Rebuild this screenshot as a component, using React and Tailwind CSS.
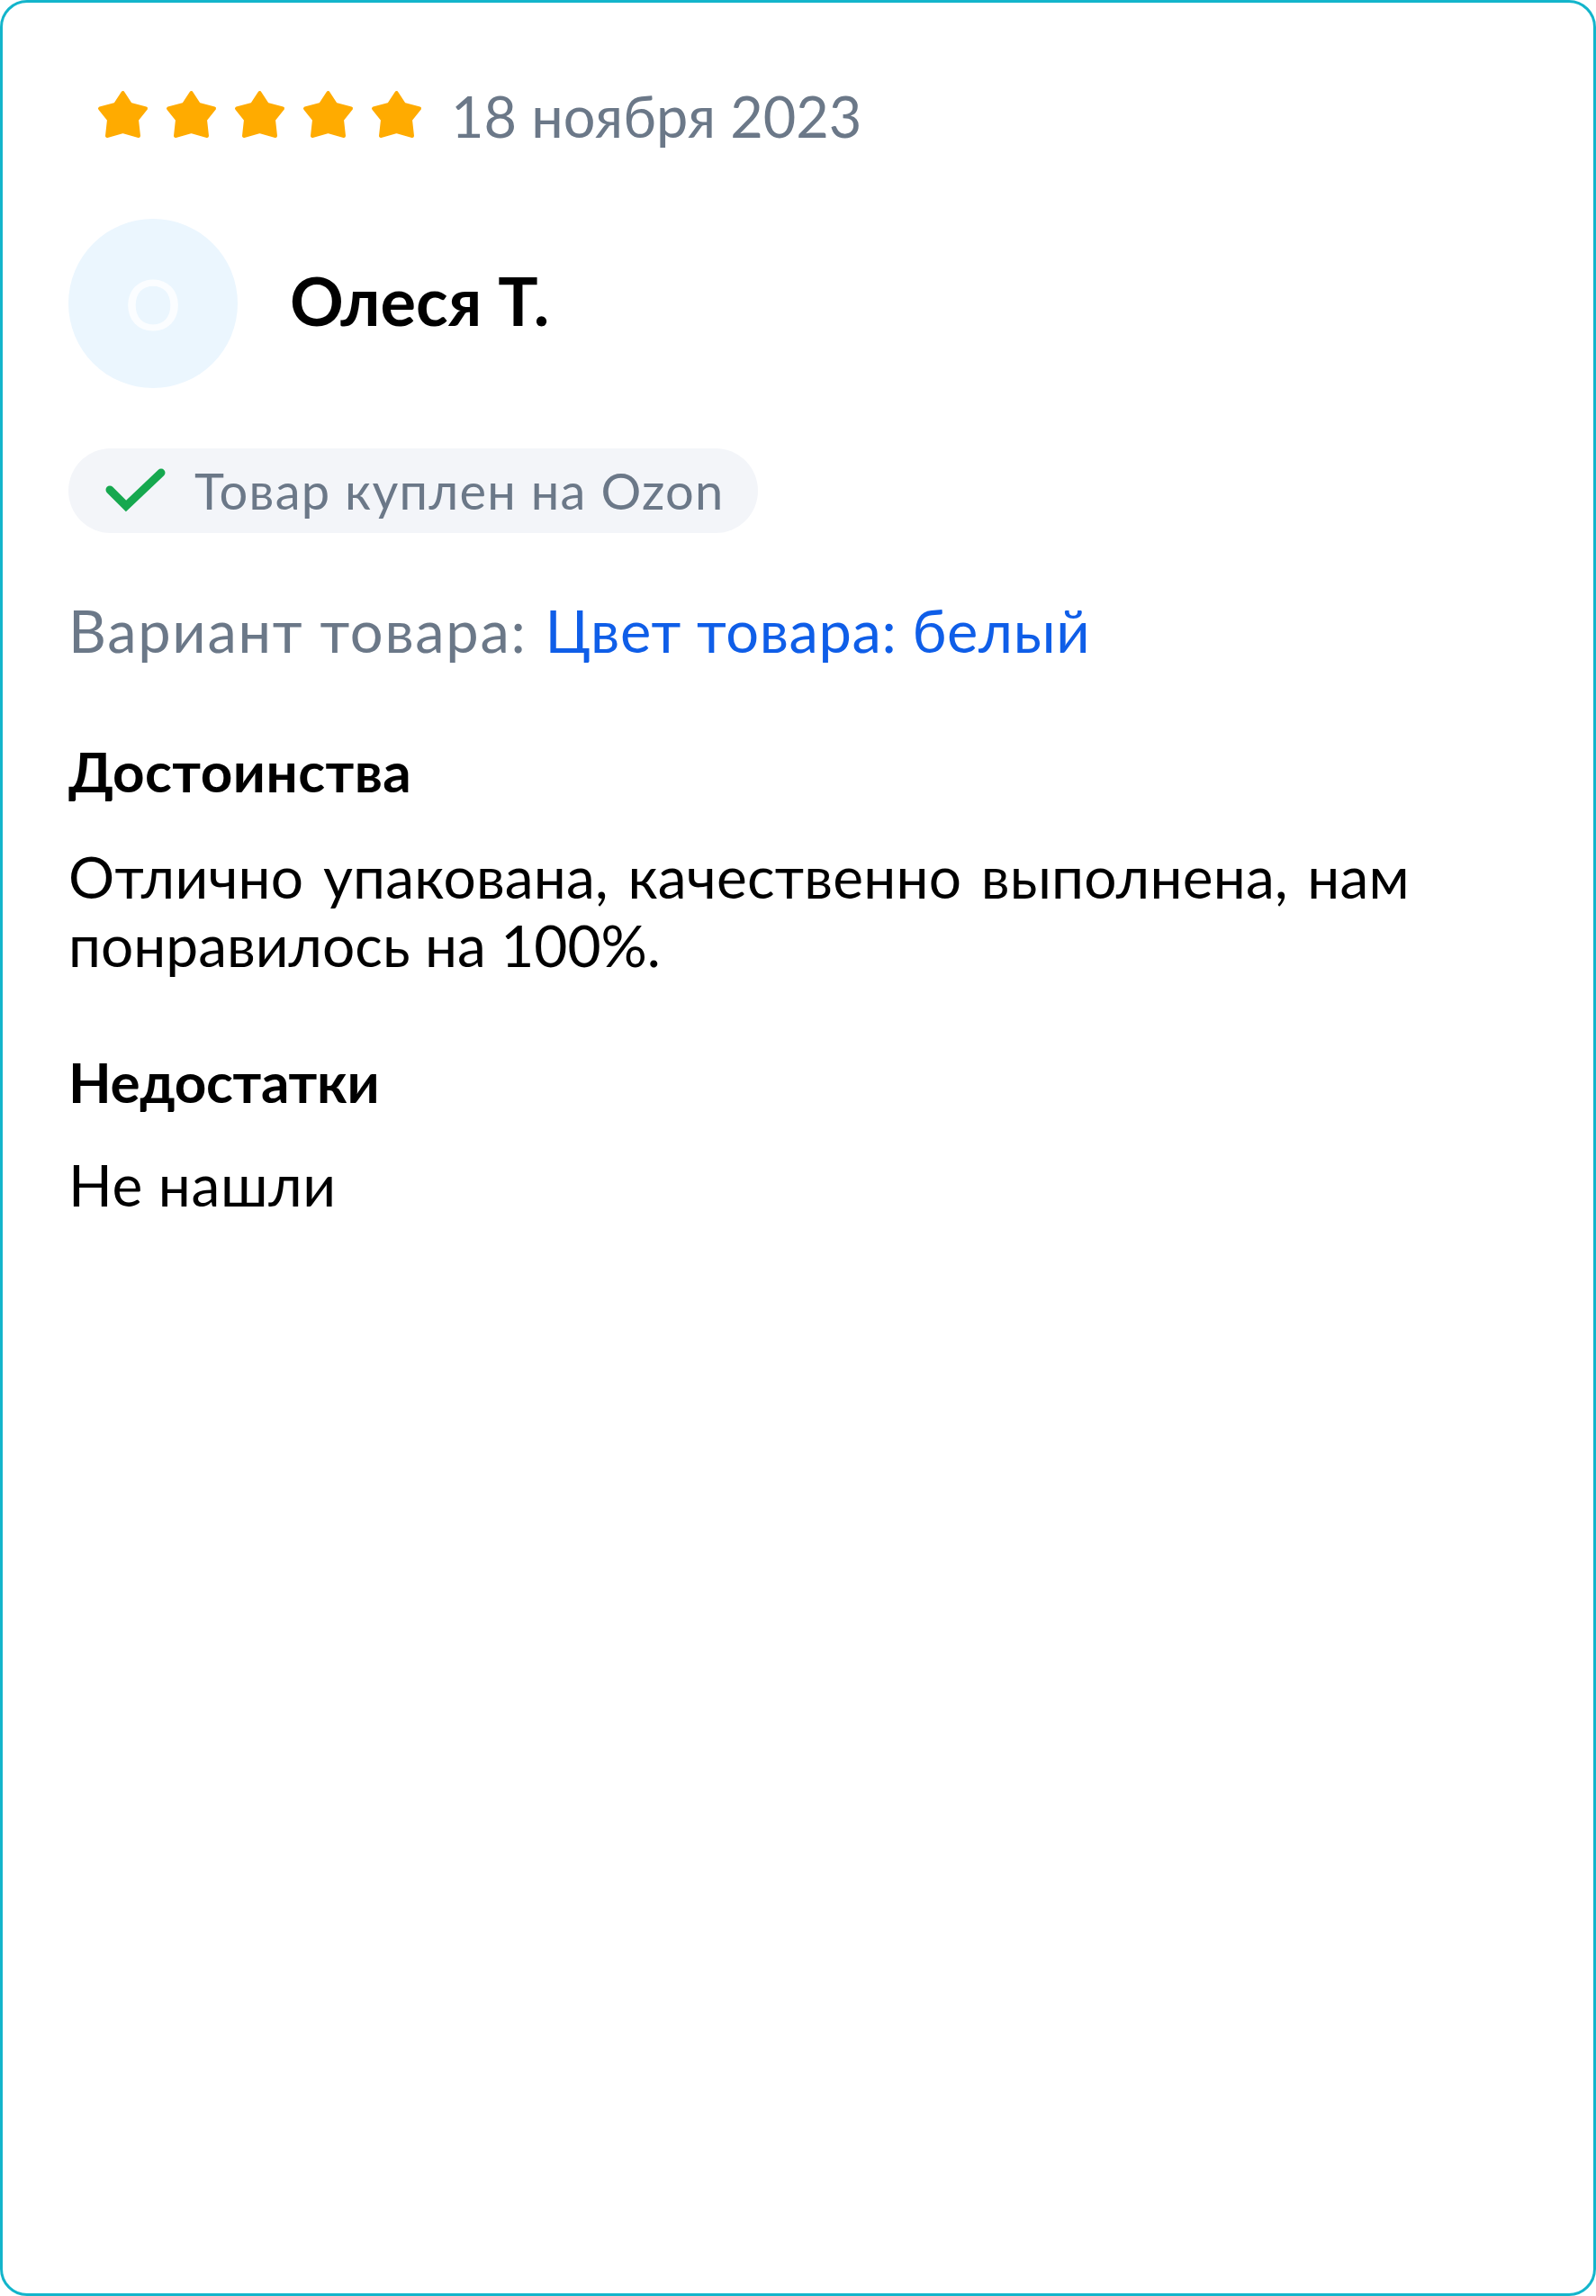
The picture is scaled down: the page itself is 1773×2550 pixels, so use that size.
import React from 'react';

const Star = () => (
  <svg viewBox="0 0 57 54" className="w-[57px] h-[54px]" fill="#ffab00" stroke="#ffab00" strokeWidth="4" strokeLinejoin="round">
    <path d="M28.5 3 L37 16 L54 20.5 L44 33 L46 51 L28.5 46 L11 51 L13 33 L3 20.5 L20 16 Z" />
  </svg>
);

const App = () => {
  return (
    <div className="w-[1773px] h-[2550px] bg-white font-['Lato',sans-serif]">
      <div className="w-full h-full bg-white border-[3px] border-[#13b5cb] rounded-[30px] pl-[73px] pt-[91px] text-black">
        <div className="flex items-center h-[68px] pl-[32px]">
          <div className="flex gap-[19px] -mt-[2px]">
            <Star /><Star /><Star /><Star /><Star />
          </div>
          <span className="ml-[32px] text-[63px] leading-none text-[#6b7888]">18 ноября 2023</span>
        </div>

        <div className="flex items-center mt-[81px]">
          <div className="w-[188px] h-[188px] rounded-full bg-[#ebf6fe] flex items-center justify-center text-white/80 text-[78px] font-medium">O</div>
          <div className="ml-[58px] -mt-[6px] text-[74px] font-bold leading-none">Олеся Т.</div>
        </div>

        <div className="mt-[67px] w-[766px] h-[94px] rounded-full bg-[#f3f5f9] flex items-center pl-[40px]">
          <svg viewBox="0 0 70 50" className="w-[70px] h-[50px]" fill="none" stroke="#16a84f" strokeWidth="9" strokeLinecap="round" strokeLinejoin="miter">
            <path d="M6 24 L24 42 L63 5" />
          </svg>
          <span className="ml-[30px] text-[56px] leading-none text-[#6b7888] tracking-[1.3px]">Товар куплен на Ozon</span>
        </div>

        <div className="mt-[76px] text-[65px] leading-none text-[#6b7888] flex gap-[20px]">
          <span className="tracking-[1.7px]">Вариант товара:</span>
          <span className="text-[#0f5ee8] tracking-[0.6px]">Цвет товара: белый</span>
        </div>

        <div className="mt-[92px] text-[62px] font-bold leading-none tracking-[0.45px]">Достоинства</div>
        <div className="mt-[49px] text-[64px] leading-[76px] w-[1600px]">
          <span className="[word-spacing:5px] tracking-[0.2px]">Отлично упакована, качественно выполнена, нам</span>
          <br />
          понравилось на 100%.
        </div>

        <div className="mt-[82px] text-[62px] font-bold leading-none tracking-[-0.3px]">Недостатки</div>
        <div className="mt-[46px] text-[64px] leading-[76px] tracking-[0.6px]">Не нашли</div>
      </div>
    </div>
  );
};

export default App;
